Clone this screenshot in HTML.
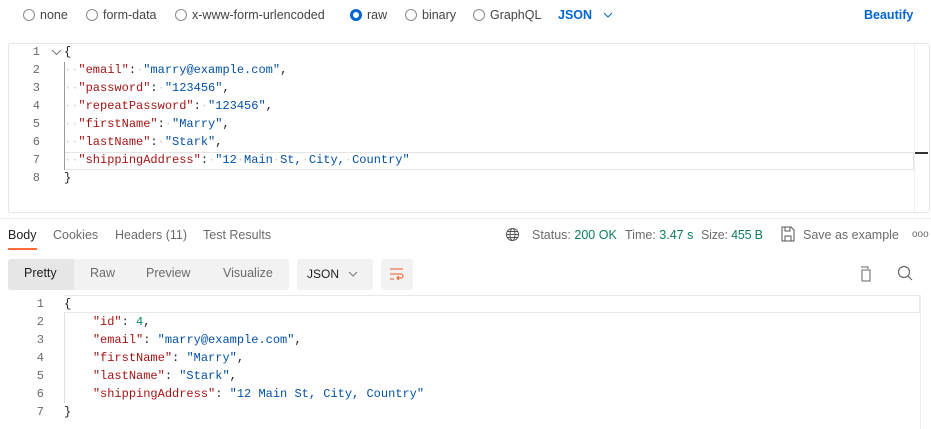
<!DOCTYPE html>
<html><head><meta charset="utf-8"><style>
*{margin:0;padding:0;box-sizing:border-box}
body{width:931px;height:429px;background:#fff;font-family:"Liberation Sans",sans-serif;font-size:12.5px;color:#212121;position:relative;overflow:hidden}
.a{position:absolute;white-space:nowrap}
.r{width:12px;height:12px;border:1px solid #8a8a8a;border-radius:50%;display:inline-block;vertical-align:-2px;margin-right:5px}
.r.on{border:3.5px solid #0265d2}
.code{font-family:"Liberation Mono",monospace;font-size:12px;line-height:18px}
.code div{white-space:pre}
.ln{color:#6b6b6b;text-align:right;width:16px}
.k{color:#a31515}.s{color:#0451a5}.n{color:#098658}.d{color:#ccc}
.g{color:#6b6b6b}.gr{color:#0d7d5d}
</style></head><body>
<div class="a" style="left:23px;top:8px;color:#444"><span class="r"></span>none</div>
<div class="a" style="left:86px;top:8px;color:#444"><span class="r"></span>form-data</div>
<div class="a" style="left:175px;top:8px;color:#444"><span class="r"></span>x-www-form-urlencoded</div>
<div class="a" style="left:350px;top:8px;color:#444"><span class="r on"></span>raw</div>
<div class="a" style="left:405px;top:8px;color:#444"><span class="r"></span>binary</div>
<div class="a" style="left:473px;top:8px;color:#444"><span class="r"></span>GraphQL</div>
<div class="a" style="left:558px;top:8px;color:#0265d2;font-weight:bold">JSON</div>
<svg class="a" style="left:603px;top:11px" width="10" height="8"><path d="M1 2l4 4 4-4" stroke="#0265d2" fill="none"/></svg>
<div class="a" style="left:864px;top:8px;color:#0265d2;font-weight:bold">Beautify</div>

<div class="a" style="left:8px;top:43px;width:922px;height:170px;border:1px solid #e6e6e6;border-radius:3px"></div>
<div class="a" style="left:64px;top:152px;width:850px;height:18px;border:1px solid #e4e4e4;border-left:none"></div>
<div class="a" style="left:914px;top:152px;width:14px;height:2px;background:#333"></div>
<div class="a" style="left:914px;top:44px;width:1px;height:168px;background:#eee"></div>
<div class="a" style="left:64px;top:62px;width:1px;height:108px;background:#999"></div>
<svg class="a" style="left:51px;top:47px" width="12" height="10"><path d="M1 3l4.5 4.5L10 3" stroke="#777" fill="none"/></svg>
<div class="a code" style="left:24px;top:43px">
<div class="ln">1</div><div class="ln">2</div><div class="ln">3</div><div class="ln">4</div><div class="ln">5</div><div class="ln">6</div><div class="ln">7</div><div class="ln">8</div></div>
<div class="a code" style="left:64px;top:43px">
<div>{</div>
<div><span class="d">··</span><span class="k">"email"</span>:<span class="d">·</span><span class="s">"marry@example.com"</span>,</div>
<div><span class="d">··</span><span class="k">"password"</span>:<span class="d">·</span><span class="s">"123456"</span>,</div>
<div><span class="d">··</span><span class="k">"repeatPassword"</span>:<span class="d">·</span><span class="s">"123456"</span>,</div>
<div><span class="d">··</span><span class="k">"firstName"</span>:<span class="d">·</span><span class="s">"Marry"</span>,</div>
<div><span class="d">··</span><span class="k">"lastName"</span>:<span class="d">·</span><span class="s">"Stark"</span>,</div>
<div><span class="d">··</span><span class="k">"shippingAddress"</span>:<span class="d">·</span><span class="s">"12<span class="d">·</span>Main<span class="d">·</span>St,<span class="d">·</span>City,<span class="d">·</span>Country"</span></div>
<div>}</div></div>

<div class="a" style="left:0;top:218px;width:931px;height:1px;background:#eee"></div>
<div class="a" style="left:8px;top:228px">Body</div>
<div class="a" style="left:8px;top:248px;width:29px;height:2px;background:#ff6c37"></div>
<div class="a g" style="left:53px;top:228px">Cookies</div>
<div class="a g" style="left:115px;top:228px">Headers (11)</div>
<div class="a g" style="left:203px;top:228px">Test Results</div>
<svg class="a" style="left:505px;top:227px" width="15" height="15" fill="none" stroke="#555"><circle cx="7.5" cy="7.5" r="6"/><ellipse cx="7.5" cy="7.5" rx="2.5" ry="6"/><path d="M1.5 7.5h12M2.5 4.5h10M2.5 10.5h10"/></svg>
<div class="a g" style="left:532px;top:228px">Status: <span class="gr">200 OK</span></div>
<div class="a g" style="left:625px;top:228px">Time: <span class="gr">3.47 s</span></div>
<div class="a g" style="left:701px;top:228px;letter-spacing:-0.2px">Size: <span class="gr">455 B</span></div>
<svg class="a" style="left:781px;top:226px" width="14" height="16" fill="none" stroke="#555"><path d="M1 1h9l3 3v11H1z M4 1v4h5V1 M4 15v-5h6v5"/></svg>
<div class="a g" style="left:803px;top:228px">Save as example</div>
<div class="a g" style="left:912px;top:229px;font-size:10px">ooo</div>

<div class="a" style="left:8px;top:259px;width:281px;height:31px;background:#f2f2f2;border-radius:3px"></div>
<div class="a" style="left:8px;top:259px;width:66px;height:31px;background:#e6e6e6;border-radius:3px 0 0 3px"></div>
<div class="a" style="left:24px;top:266px">Pretty</div>
<div class="a g" style="left:90px;top:266px">Raw</div>
<div class="a g" style="left:146px;top:266px">Preview</div>
<div class="a g" style="left:223px;top:266px">Visualize</div>
<div class="a" style="left:297px;top:259px;width:76px;height:31px;background:#f2f2f2;border-radius:3px"></div>
<div class="a" style="left:307px;top:267px;font-size:12px">JSON</div>
<svg class="a" style="left:348px;top:270px" width="10" height="8"><path d="M1 2l4 4 4-4" stroke="#777" fill="none"/></svg>
<div class="a" style="left:381px;top:259px;width:32px;height:31px;background:#f2f2f2;border-radius:3px"></div>
<svg class="a" style="left:389px;top:266px" width="16" height="16" fill="none" stroke="#e8582a"><path d="M1 3h13M1 8h11a2 2 0 0 1 0 4H8M10 10l-2 2 2 2M1 13h4"/></svg>
<svg class="a" style="left:857px;top:266px" width="16" height="16" fill="none" stroke="#666"><path d="M4 1h7v2M5 4h8v11H5z" /></svg>
<svg class="a" style="left:897px;top:265px" width="16" height="17" fill="none" stroke="#666" stroke-width="1.2"><circle cx="7" cy="7" r="5.5"/><path d="M11 11l4 4"/></svg>

<div class="a" style="left:64px;top:295px;width:856px;height:18px;border:1px solid #e8e8e8;border-left:none"></div>
<div class="a" style="left:920px;top:295px;width:1px;height:134px;background:#eee"></div>
<div class="a" style="left:64px;top:313px;width:1px;height:90px;background:#e0e0e0"></div>
<div class="a code" style="left:28px;top:295px">
<div class="ln">1</div><div class="ln">2</div><div class="ln">3</div><div class="ln">4</div><div class="ln">5</div><div class="ln">6</div><div class="ln">7</div></div>
<div class="a code" style="left:64px;top:295px">
<div>{</div>
<div>    <span class="k">"id"</span>: <span class="n">4</span>,</div>
<div>    <span class="k">"email"</span>: <span class="s">"marry@example.com"</span>,</div>
<div>    <span class="k">"firstName"</span>: <span class="s">"Marry"</span>,</div>
<div>    <span class="k">"lastName"</span>: <span class="s">"Stark"</span>,</div>
<div>    <span class="k">"shippingAddress"</span>: <span class="s">"12 Main St, City, Country"</span></div>
<div>}</div></div>
</body></html>
